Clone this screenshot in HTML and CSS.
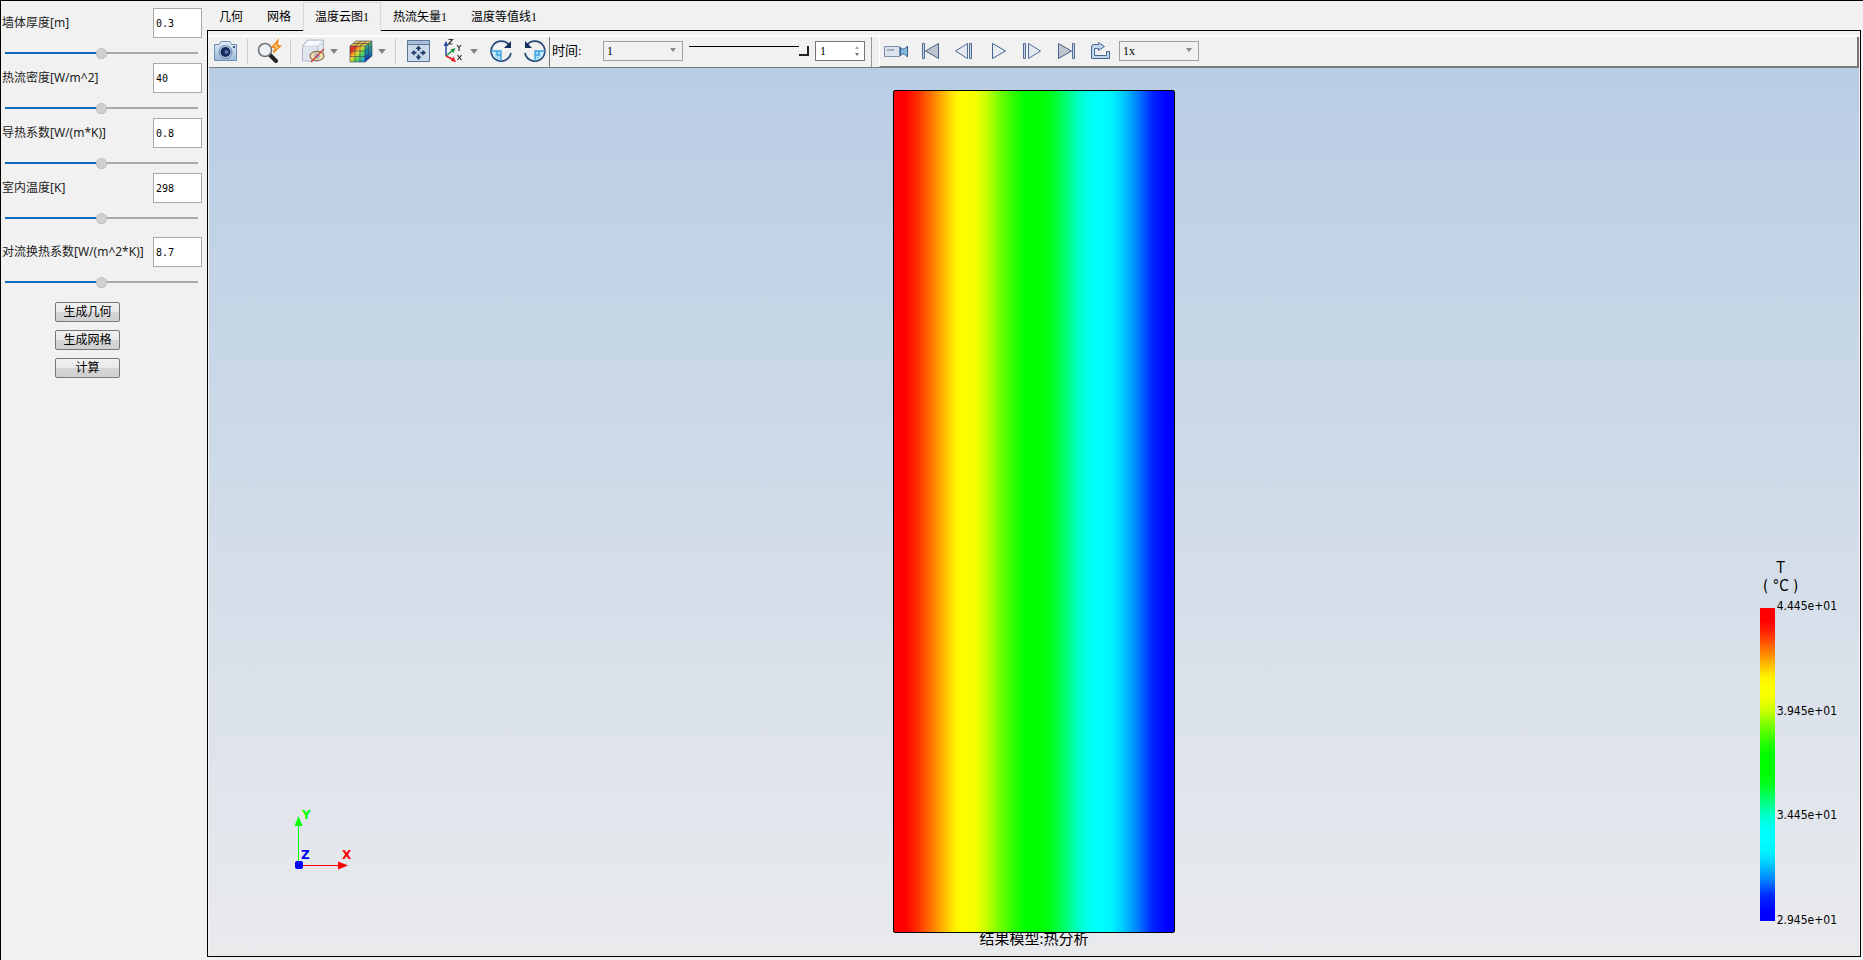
FILE: index.html
```html
<!DOCTYPE html>
<html lang="zh-CN">
<head>
<meta charset="utf-8">
<title>热分析</title>
<link rel="stylesheet" href="styles.css">
</head>
<body>
<div class="app">
  <aside class="sidebar">
    <form class="params">
      <div class="field">
        <label for="thick">墙体厚度[m]</label>
        <input class="value" id="thick" type="text" value="0.3">
        <input class="slider" type="range" aria-label="墙体厚度" value="50">
      </div>
      <div class="field">
        <label for="flux">热流密度[W/m^2]</label>
        <input class="value" id="flux" type="text" value="40">
        <input class="slider" type="range" aria-label="热流密度" value="50">
      </div>
      <div class="field">
        <label for="cond">导热系数[W/(m*K)]</label>
        <input class="value" id="cond" type="text" value="0.8">
        <input class="slider" type="range" aria-label="导热系数" value="50">
      </div>
      <div class="field">
        <label for="temp">室内温度[K]</label>
        <input class="value" id="temp" type="text" value="298">
        <input class="slider" type="range" aria-label="室内温度" value="50">
      </div>
      <div class="field field-spaced">
        <label for="conv">对流换热系数[W/(m^2*K)]</label>
        <input class="value" id="conv" type="text" value="8.7">
        <input class="slider" type="range" aria-label="对流换热系数" value="50">
      </div>
      <div class="actions">
        <button type="button">生成几何</button>
        <button type="button">生成网格</button>
        <button type="button">计算</button>
      </div>
    </form>
  </aside>

  <main class="workspace">
    <nav class="tabs">
      <button class="tab" type="button">几何</button>
      <button class="tab" type="button">网格</button>
      <button class="tab tab-active" type="button">温度云图1</button>
      <button class="tab" type="button">热流矢量1</button>
      <button class="tab" type="button">温度等值线1</button>
    </nav>
    <section class="pane">
      <div class="toolbars">
        <div class="toolbar toolbar-view">
          <button class="tool" type="button" aria-label="截图">
            <svg viewBox="0 0 26 26"><defs><linearGradient id="cam" x2="0" y2="1"><stop stop-color="#e2edf8"/><stop offset="1" stop-color="#9db9d9"/></linearGradient></defs><path d="M1.500 6.500h5l1.500-3h9l1.500 3h5v16h-22z" fill="url(#cam)" stroke="#6f8fb8"/><circle cx="12.500" cy="14" r="6.500" fill="#c3d5e9" stroke="#6485b0"/><circle cx="12.500" cy="14" r="5" fill="#152c5c"/><circle cx="13.500" cy="14" r="2" fill="#5779ad"/><circle cx="21" cy="9" r="1" fill="#234"/></svg>
          </button>
          <span class="sep"></span>
          <button class="tool" type="button" aria-label="快速缩放">
            <svg viewBox="0 0 26 26"><path d="M14 17l6 6" stroke="#222" stroke-width="4" stroke-linecap="round"/><circle cx="9" cy="12" r="6.500" fill="#edf2f5" stroke="#71777c" stroke-width="1.600"/><path d="M22 2.500l-6 6.500 3.500.5-2 5 7-6.500-3.500-.5z" fill="#ffd98c" stroke="#ee8414" stroke-width="1.300"/></svg>
          </button>
          <span class="sep"></span>
          <div class="tool-drop">
            <button class="tool" type="button" aria-label="显示模式">
              <svg viewBox="0 0 26 26"><path d="M3.500 8l5-6h16v14l-5 7h-16z" fill="#e1e5ee" stroke="#aeb6c7"/><path d="M3.500 8h15v15M18.500 8l6-6" fill="none" stroke="#bbc2d0"/><path d="M5 8l4.500-5h14l-5 4.500z" fill="#f8f9fc"/><ellipse cx="18" cy="18" rx="7" ry="4.500" fill="#f5e2ab" stroke="#897b60" stroke-width="1.300"/><circle cx="18" cy="18" r="2.800" fill="#9fb0c6"/><path d="M12 24L25 11" stroke="#d6392b" stroke-width="1.300"/></svg>
            </button>
            <button class="drop" type="button" aria-label="更多显示模式"></button>
          </div>
          <div class="tool-drop">
            <button class="tool" type="button" aria-label="云图">
              <svg viewBox="0 0 26 26"><defs><linearGradient id="cube" x2="1" y2="1"><stop offset=".2" stop-color="#ee2f1d"/><stop offset=".42" stop-color="#ffd326"/><stop offset=".65" stop-color="#4fd95b"/><stop offset=".95" stop-color="#1796e8"/></linearGradient><linearGradient id="side" x2="0" y2="1"><stop stop-color="#5bb94b"/><stop offset=".5" stop-color="#168aa9"/><stop offset="1" stop-color="#0b1ea9"/></linearGradient></defs><path d="M3 8h15v16H3z" fill="url(#cube)"/><path d="M3 8l6-5h16l-7 5z" fill="#eac14b"/><path d="M18 8l7-5v15l-7 6z" fill="url(#side)"/><path d="M3 8h15v16H3zM8 8v16M13 8v16M3 13h15M3 18.500h15M3 8l6-5h16l-7 5M8 8l6-5M13 8l6-5M6 5.500h15.500M25 3v15l-7 6M21.500 5.500v15.500M18 13l7-5M18 18.500l7-5.500" fill="none" stroke="#324052" stroke-width=".6"/></svg>
            </button>
            <button class="drop" type="button" aria-label="更多云图"></button>
          </div>
          <span class="sep"></span>
          <div class="tool-set">
            <button class="tool" type="button" aria-label="适合窗口">
              <svg viewBox="0 0 26 26"><path d="M2.500 2.500h22v21h-22z" fill="#cbdaea" stroke="#5c7497"/><path d="M3 3h21v3H3z" fill="#a9c0da"/><path d="M3 6.500h21" stroke="#5c7497"/><path d="M13.500 7.500l3 3.500h-2v2h-2v-2h-2zM13.500 22l3-3.500h-2v-2h-2v2h-2zM6 14.800l3.500-3v2h2v2h-2v2zM21 14.800l-3.500-3v2h-2v2h2v2z" fill="#203d6c"/></svg>
            </button>
            <div class="tool-drop">
              <button class="tool" type="button" aria-label="视角">
                <svg viewBox="0 0 26 26"><g fill="none" stroke-width="1.500"><path d="M7 18V6" stroke="#294da1"/><path d="M7 18l7-6" stroke="#19903e"/><path d="M7 18l8 4" stroke="#ed1c24"/></g><path d="M7 3l2.500 5h-5z" fill="#294da1"/><path d="M16.500 10l-2 5-3-3.500z" fill="#19903e"/><path d="M17 24l-5-1 2.500-4.500z" fill="#ed1c24"/><path d="M9.500 1.500h4l-4 4.500h4M18 7l2 2.500L22 7M20 9.500V13M18.500 17l4 5M22.500 17l-4 5" fill="none" stroke="#333" stroke-width="1.200"/></svg>
              </button>
              <button class="drop" type="button" aria-label="更多视角"></button>
            </div>
            <button class="tool" type="button" aria-label="顺时针旋转">
              <svg viewBox="0 0 26 26"><path d="M4 13h10v10A10 10 0 0 1 4 13z" fill="#d4efff"/><path d="M14 13v9a9 9 0 0 1-6-3v-6z" fill="#a7dcfa"/><path d="M22 7A10 10 0 1 0 24 15" fill="none" stroke="#264778" stroke-width="1.700"/><path d="M4 13h10v10M10 13v4h4" fill="none" stroke="#3aa4df" stroke-width="1.400"/><path d="M24 3v7h-7z" fill="#14305f"/></svg>
            </button>
            <button class="tool" type="button" aria-label="逆时针旋转">
              <svg viewBox="0 0 26 26"><path d="M24 13H14v10a10 10 0 0 0 10-10z" fill="#d4efff"/><path d="M14 13v9a9 9 0 0 0 6-3v-6z" fill="#a7dcfa"/><path d="M6 7A10 10 0 1 1 4 15" fill="none" stroke="#264778" stroke-width="1.700"/><path d="M24 13H14v10M18 13v4h-4" fill="none" stroke="#3aa4df" stroke-width="1.400"/><path d="M4 3v7h7z" fill="#14305f"/></svg>
            </button>
          </div>
        </div>
        <div class="toolbar toolbar-time">
          <label for="time">时间:</label>
          <span class="combo"><select id="time"><option>1</option></select></span>
          <input class="time-slider" type="range" aria-label="时间步" value="100">
          <span class="spin"><input type="number" aria-label="步数" value="1"></span>
        </div>
        <div class="toolbar toolbar-play">
          <button class="play" type="button" aria-label="录制">
            <svg viewBox="0 0 26 26"><path d="M.500 8.500h15v10h-15z" fill="#dce2eb" stroke="#7890ae"/><path d="M3 11h7v2H3z" fill="#a1acbc"/><path d="M16.500 9.500l2 1.500h2l3-3v11l-3-3h-2l-2 1.500z" fill="#84bce2" stroke="#315d8e"/></svg>
          </button>
          <button class="play" type="button" aria-label="第一帧">
            <svg viewBox="0 0 26 26"><path d="M4.500 5.500h2v15h-2z" fill="#c6d6e9" stroke="#526d94"/><path d="M20.500 5.500v15L7.500 13z" fill="#bdc4cd" stroke="#455f86"/></svg>
          </button>
          <button class="play" type="button" aria-label="上一帧">
            <svg viewBox="0 0 26 26"><path d="M15.500 5.500v15L3.500 13z" fill="#e4e9ef" stroke="#526d94"/><path d="M17.500 5.500h2v15h-2z" fill="#c6d6e9" stroke="#526d94"/></svg>
          </button>
          <button class="play" type="button" aria-label="播放">
            <svg viewBox="0 0 26 26"><path d="M6.500 5.500v15l13-7.500z" fill="#e8edf4" stroke="#41618e"/></svg>
          </button>
          <button class="play" type="button" aria-label="下一帧">
            <svg viewBox="0 0 26 26"><path d="M8.500 5.500v15L20.500 13z" fill="#e4e9ef" stroke="#526d94"/><path d="M3.500 5.500h2v15h-2z" fill="#c6d6e9" stroke="#526d94"/></svg>
          </button>
          <button class="play" type="button" aria-label="最后一帧">
            <svg viewBox="0 0 26 26"><path d="M18.500 5.500h2v15h-2z" fill="#c6d6e9" stroke="#526d94"/><path d="M4.500 5.500v15l13-7.500z" fill="#bdc4cd" stroke="#455f86"/></svg>
          </button>
          <button class="play" type="button" aria-label="循环">
            <svg viewBox="0 0 26 26"><path d="M3.500 20.500V9q0-2.500 2.500-2.500h4.500v-2l6 4-6 4v-2H6.500v7h12v-4h3v7z" fill="#c1d6ec" stroke="#466994"/></svg>
          </button>
          <span class="combo"><select aria-label="播放速度"><option>1x</option></select></span>
        </div>
      </div>

      <div class="viewport">
        <div class="model"></div>
        <p class="caption">结果模型:热分析</p>

        <svg class="triad" viewBox="0 0 60 66">
          <path d="M6.500 56V12" stroke="#0f0"/><path d="M6.500 6l4 10h-8z" fill="#0f0"/>
          <path d="M6 55.500h42" stroke="#f00"/><path d="M56 55.500l-10-4v8z" fill="#f00"/>
          <rect x="3" y="51" width="8" height="8" rx="2" fill="#00f"/>
          <text x="10" y="9" fill="#0f0">Y</text>
          <text x="9" y="49" fill="#00f">Z</text>
          <text x="50" y="49" fill="#f00">X</text>
        </svg>

        <div class="legend">
          <div class="legend-title"><span>T</span><span>( °C )</span></div>
          <div class="legend-scale">
            <div class="legend-bar"></div>
            <div class="legend-labels"><span>4.445e+01</span><span>3.945e+01</span><span>3.445e+01</span><span>2.945e+01</span></div>
          </div>
        </div>
      </div>
    </section>
  </main>
</div>
</body>
</html>
```
FILE: styles.css
```css
:root {
  --spectrum: #f00 0%, #f00 4%, #ff2800 8%, #ff8000 14%, #ffc800 19%, #fff200 22%, #ff0 25%, #f4ff00 29%, #c8ff00 33%, #80ff00 37%, #28ff00 43%, #0f0 47%, #0f0 53%, #00ff28 57%, #00ff80 62%, #00ffc8 66%, #00fff4 70%, #0ff 74%, #00f2ff 78%, #00c8ff 82%, #0080ff 87%, #0028ff 92%, #00f 97%, #00f 100%;
}

* { box-sizing: border-box; }

body {
  margin: 0;
  background: #f1f1f1;
  color: #000;
  font: 12px/16px "Liberation Serif", "Noto Sans CJK SC", serif;
}

button, input, select { margin: 0; font: inherit; color: inherit; }
button { padding: 0; border: 0; background: none; }

.app {
  display: grid;
  grid-template-columns: 206px 1fr;
  height: 100vh;
  border: solid #000;
  border-width: 1px 0 0 1px;
}

/* Parameters */
.params { padding: 7px 5px 0 0; }

.field {
  display: grid;
  grid-template-columns: 1fr 49px;
  align-items: center;
  row-gap: 7px;
  margin-bottom: 1px;
  height: 54px;
  align-content: start;
}

.field-spaced { margin-top: 10px; }

.field label {
  padding-left: 1px;
  color: #222;
  font-family: "Noto Sans", "Noto Sans CJK SC", sans-serif;
  white-space: nowrap;
}

.value {
  width: 49px;
  height: 30px;
  padding: 0 2px;
  border: 1px solid #a8a8a8;
  background: #fff;
  font: 10px/16px "DejaVu Sans Mono", monospace;
}

.slider {
  appearance: none;
  grid-column: 1 / -1;
  justify-self: stretch;
  height: 16px;
  margin: 0 4px;
  background: linear-gradient(90deg, #0f6cbd 50%, #aaa 50%) center / 100% 2px no-repeat;
}

.slider::-webkit-slider-thumb {
  appearance: none;
  width: 11px;
  height: 11px;
  border: 1px dotted #aaa;
  border-radius: 50%;
  background: #d0d0d0;
}

.actions {
  display: flex;
  flex-direction: column;
  gap: 8px;
  width: 65px;
  margin: 11px 0 0 54px;
}

.actions button {
  height: 20px;
  border: 1px solid #777;
  border-radius: 2px;
  background: linear-gradient(#f1f1f1, #e8e8e8 50%, #d6d6d6 50%, #d0d0d0);
}

/* Tabs */
.workspace {
  display: flex;
  flex-direction: column;
  min-width: 0;
  padding: 1px 2px 3px 0;
}

.tabs { display: flex; height: 28px; }

.tab {
  padding: 2px 12px 0;
  white-space: nowrap;
}

.tab-active {
  z-index: 1;
  margin-bottom: -1px;
  border: 1px solid #d8d8d8;
  border-bottom: 0;
  padding: 0 11px;
  background: #f1f1f1;
}

.pane {
  display: flex;
  flex: 1;
  flex-direction: column;
  min-height: 0;
  padding: 4px 1px 0;
  border: 1px solid #000;
}

/* Toolbars */
.toolbars {
  display: flex;
  height: 33px;
  border-top: 2px solid #fff;
  border-bottom: 1px solid #777d77;
}

.toolbar {
  display: flex;
  align-items: center;
  padding-bottom: 2px;
}

.toolbar-view {
  gap: 8px;
  padding-left: 4px;
  padding-right: 2px;
  border-right: 1px solid #777;
}

.tool, .play { display: flex; align-items: center; justify-content: center; }
.tool svg, .play svg { width: 26px; height: 26px; }
.play { width: 34px; height: 26px; }
.tool-drop { display: flex; align-items: center; gap: 4px; }
.tool-set { display: flex; align-items: center; gap: 8px; padding-left: 1px; }
.sep { width: 1px; height: 25px; background: #ccc; }

.drop { width: 10px; height: 20px; }

.drop::before {
  content: "";
  display: block;
  border: solid transparent;
  border-width: 5px 4px 0;
  border-top-color: #858585;
  width: 0;
  margin: 0 auto;
}

.toolbar-time { padding-left: 2px; padding-right: 6px; border-right: 1px solid #999; }
.toolbar-time label { width: 51px; font-size: 13px; white-space: nowrap; }

.toolbar-play {
  flex: 1;
  margin-left: 7px;
  padding-bottom: 1px;
  border-left: 1px solid #fff;
  border-right: 2px solid #777;
  border-bottom: 1px solid #777;
}

.toolbar-play .combo { margin-left: 1px; }
.combo, .spin { position: relative; display: flex; }

.combo select {
  appearance: none;
  width: 80px;
  height: 20px;
  padding: 0 3px;
  border: 1px solid #a0a0a0;
  border-radius: 0;
  background: #f1f1f1;
}

.combo::after {
  content: "";
  position: absolute;
  top: 7px;
  right: 7px;
  border: solid transparent;
  border-width: 4px 3px 0;
  border-top-color: #888;
}

.time-slider {
  appearance: none;
  width: 120px;
  height: 20px;
  margin: 0 6px;
  background: linear-gradient(#000, #000) 0 5px / 110px 1px no-repeat;
}

.time-slider::-webkit-slider-thumb {
  appearance: none;
  width: 10px;
  height: 10px;
  border: solid #222;
  border-width: 0 2px 2px 0;
  background: #f1f1f1;
}

.spin input {
  appearance: textfield;
  width: 50px;
  height: 20px;
  padding: 0 4px;
  border: 1px solid #777;
  background: #fff;
}

.spin input::-webkit-inner-spin-button { display: none; }

.spin::before, .spin::after {
  content: "";
  position: absolute;
  right: 6px;
  border: solid transparent;
}

.spin::before { top: 5px; border-width: 0 2px 3px; border-bottom-color: #aaa; }
.spin::after { bottom: 5px; border-width: 3px 2px 0; border-top-color: #777; }

/* Viewport */
.viewport {
  position: relative;
  display: flex;
  flex: 1;
  flex-direction: column;
  align-items: center;
  min-height: 0;
  padding: 22px 0 8px;
  background: linear-gradient(#b9cde4, #d0dce8 50%, #dfe4ec 78%, #e9eaec);
}

.model {
  z-index: 1;
  flex: 1;
  width: 282px;
  border: 1px solid #000;
  border-radius: 2px;
  background: linear-gradient(90deg, var(--spectrum));
}

.caption {
  margin: -5px 0 0;
  font: 15px/20px "Noto Sans", "Noto Sans CJK SC", sans-serif;
}

.triad {
  position: absolute;
  left: 83px;
  bottom: 80px;
  width: 60px;
  height: 66px;
  overflow: visible;
  font: bold 12px "DejaVu Sans", sans-serif;
}

.legend {
  position: absolute;
  right: 22px;
  bottom: 35px;
  font: 12px/16px "DejaVu Sans Condensed", "DejaVu Sans", sans-serif;
}

.legend-title {
  display: flex;
  flex-direction: column;
  align-items: center;
  width: 42px;
  margin-bottom: 13px;
  font: 15px/18px "DejaVu Sans Condensed", "DejaVu Sans", sans-serif;
  white-space: nowrap;
}

.legend-scale { display: flex; gap: 2px; height: 313px; }

.legend-bar {
  width: 15px;
  background: linear-gradient(var(--spectrum));
}

.legend-labels {
  display: flex;
  flex-direction: column;
  justify-content: space-between;
  margin: -10px 0 -7px;
}
```
